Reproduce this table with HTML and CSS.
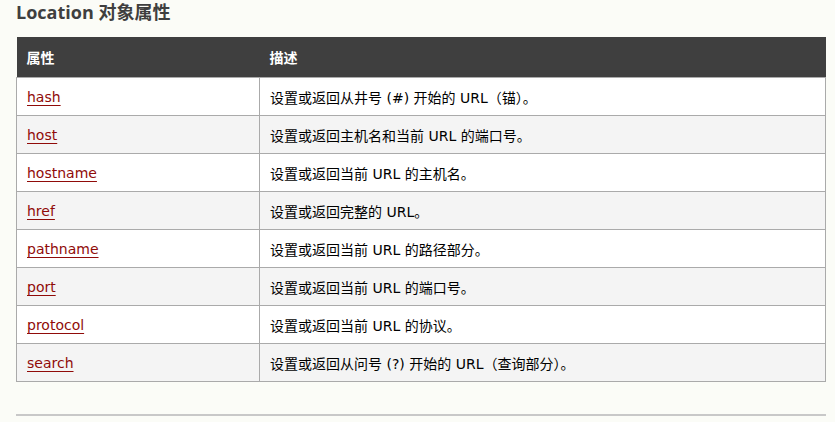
FILE: index.html
```html
<!DOCTYPE html>
<html lang="zh">
<head>
<meta charset="utf-8">
<title>Location 对象属性</title>
<link rel="stylesheet" href="styles.css">
</head>
<body>
<main class="page">
  <h2 class="title">Location 对象属性</h2>
  <table class="props">
    <thead>
      <tr><th class="col-name">属性</th><th>描述</th></tr>
    </thead>
    <tbody>
      <tr><td><a href="#">hash</a></td><td>设置或返回从井号 (#) 开始的 URL（锚）。</td></tr>
      <tr><td><a href="#">host</a></td><td>设置或返回主机名和当前 URL 的端口号。</td></tr>
      <tr><td><a href="#">hostname</a></td><td>设置或返回当前 URL 的主机名。</td></tr>
      <tr><td><a href="#">href</a></td><td>设置或返回完整的 URL。</td></tr>
      <tr><td><a href="#">pathname</a></td><td>设置或返回当前 URL 的路径部分。</td></tr>
      <tr><td><a href="#">port</a></td><td>设置或返回当前 URL 的端口号。</td></tr>
      <tr><td><a href="#">protocol</a></td><td>设置或返回当前 URL 的协议。</td></tr>
      <tr><td><a href="#">search</a></td><td>设置或返回从问号 (?) 开始的 URL（查询部分）。</td></tr>
    </tbody>
  </table>
  <hr class="rule">
</main>
</body>
</html>
```
FILE: styles.css
```css
html, body {
  margin: 0;
  padding: 0;
  background: #fbfcf7;
}
.page {
  width: 810px;
  padding: 0 16px;
  font-family: "DejaVu Sans", Verdana, "Noto Sans CJK SC", sans-serif;
  font-size: 14px;
  color: #000;
}
.title {
  margin: 0;
  padding-top: 0;
  height: 37px;
  line-height: 24px;
  font-family: "Open Sans", "Noto Sans CJK SC", sans-serif;
  font-size: 18px;
  font-weight: bold;
  color: #3f3f3f;
}
.props {
  width: 810px;
  border-collapse: collapse;
  table-layout: fixed;
}
.props th {
  background: #3f3f3f;
  color: #fff;
  height: 40px;
  padding: 0 10px;
  text-align: left;
  font-family: "Noto Sans CJK SC", sans-serif;
  font-size: 14px;
  font-weight: bold;
  border: 0;
}
.props .col-name {
  width: 223px;
}
.props td {
  height: 37px;
  padding: 0 10px 0 10px;
  border: 1px solid #aaaaaa;
  background: #fff;
  vertical-align: middle;
}
.props tbody tr:nth-child(even) td {
  background: #f4f4f4;
}
.props a {
  color: #900b09;
  text-decoration: underline;
  text-decoration-color: #900b09;
  text-underline-offset: 3px;
}
.rule {
  margin: 32px 0 0 0;
  border: 0;
  border-top: 2px solid #c8c8c8;
  height: 0;
}
```
